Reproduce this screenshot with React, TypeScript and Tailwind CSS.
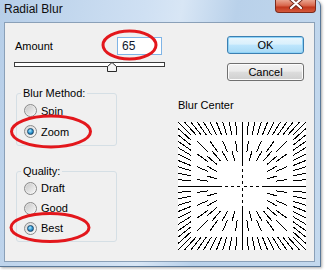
import React from "react";

function Radio({ checked }: { checked?: boolean }) {
  return (
    <span className="w-[13px] h-[13px] rounded-full border border-[#8a8a8a] bg-[linear-gradient(135deg,#d6d6d6,#fdfdfd)] flex items-center justify-center shrink-0">
      {checked ? (
        <span className="w-[7px] h-[7px] rounded-full border border-[#1b4a6e] bg-[radial-gradient(circle_at_40%_35%,#b4ecff_0%,#3aa2dc_45%,#0b4b7c_100%)]" />
      ) : (
        <span className="w-[9px] h-[9px] rounded-full bg-[linear-gradient(135deg,#c9c9c9,#f5f5f5)]" />
      )}
    </span>
  );
}

function Row({ label, checked, h }: { label: string; checked?: boolean; h: "a" | "b" }) {
  return (
    <div className={h === "a" ? "flex items-center h-[21px] pl-[7px] gap-[4px]" : "flex items-center h-[20px] pl-[7px] gap-[4px]"}>
      <Radio checked={checked} />
      <span>{label}</span>
    </div>
  );
}

function BlurCenter() {
  const C = 64;
  const segs: [number, number, number, number][] = [];
  const band = (dx: number, dy: number, R: number, a: number, b: number) => {
    segs.push([C + (dx * a) / R, C + (dy * a) / R, C + (dx * b) / R, C + (dy * b) / R]);
  };
  const ring = (R: number, n: number, f: (j: number) => [number, number] | null) => {
    const step = R / n;
    for (let j = -n + 1; j <= n - 1; j++) {
      if (j === 0) continue;
      const t = step * j;
      const r = f(j);
      if (!r) continue;
      band(t, -R, R, r[0], r[1]);
      band(t, R, R, r[0], r[1]);
      band(-R, t, R, r[0], r[1]);
      band(R, t, R, r[0], r[1]);
    }
    const r = f(n);
    if (r) {
      band(R, R, R, r[0], r[1]);
      band(-R, R, R, r[0], r[1]);
      band(R, -R, R, r[0], r[1]);
      band(-R, -R, R, r[0], r[1]);
    }
  };
  ring(64, 10, () => [51, 64]);
  ring(46, 7, (j) => (Math.abs(j) % 2 === 1 ? [34, 45] : [25, 35]));
  const axisDash: [number, number][] = [
    [20, 64],
    [14, 17],
    [8, 11],
    [2, 5],
  ];
  for (const [a, b] of axisDash) {
    band(0, -64, 64, a, b);
    band(0, 64, 64, a, b);
    band(-64, 0, 64, a, b);
    band(64, 0, 64, a, b);
  }
  return (
    <svg width="128" height="128" viewBox="0 0 128 128" className="block bg-white" shapeRendering="crispEdges">
      {segs.map((s, i) => (
        <line key={i} x1={s[0]} y1={s[1]} x2={s[2]} y2={s[3]} stroke="#000" strokeWidth="1" />
      ))}
    </svg>
  );
}

export default function App() {
  return (
    <div className="w-[325px] h-[270px] bg-white relative overflow-hidden font-['Liberation_Sans',Arial,sans-serif] text-[11px] leading-[14px] text-[#000]">
      <div className="w-[321px] h-[267px] rounded-tr-[6px] border-r border-b border-[#5a7898] bg-[linear-gradient(100deg,#b6cee8_0%,#cfe0f3_40%,#d8e6f5_50%,#b9d1ea_65%,#c4d9ee_100%)] shadow-[1px_1px_3px_rgba(0,0,0,0.35)] flex flex-col">
        <div className="h-[22px] flex items-start justify-between shrink-0">
          <span className="pl-[4px] pt-[2px] text-[12px] leading-[15px] text-[#0d0d0d]">Radial Blur</span>
          <div className="mr-[4px] w-[41px] h-[13px] rounded-b-[4px] border border-t-0 border-[#7d2a1b] bg-[linear-gradient(to_bottom,#e9a48f_0%,#d9694f_45%,#c2381d_60%,#d4593c_100%)] flex items-start justify-center">
            <svg width="14" height="10" viewBox="0 0 14 10" className="mt-[-1px]">
              <path d="M2 0 L12 9 M12 0 L2 9" stroke="#6d2316" strokeWidth="4" strokeLinecap="round" />
              <path d="M2 0 L12 9 M12 0 L2 9" stroke="#ffffff" strokeWidth="2.2" strokeLinecap="round" />
            </svg>
          </div>
        </div>
        <div className="ml-[4px] w-[311px] h-[240px] border border-[#8aa0b8] bg-[#f0f0f0] flex shrink-0">
          <div className="w-[173px] pl-[9px] pt-[14px] flex flex-col">
            <div className="w-[148px] h-[18px] flex items-center justify-between">
              <span className="pl-[1px]">Amount</span>
              <div className="w-[45px] h-[18px] border border-[#7fb4e6] bg-white flex items-center pl-[4px] text-[12px] text-[#101830]">65</div>
            </div>
            <div className="mt-[7px] relative w-[151px] h-[10px]">
              <div className="h-[5px] w-[151px] border border-[#3c3c3c] bg-white" />
              <svg width="10" height="10" viewBox="0 0 10 10" className="absolute left-[93px] top-0">
                <path d="M0.5 9.5 L0.5 4.5 L5 0.5 L9.5 4.5 L9.5 9.5 Z" fill="#f4f4f4" stroke="#2a2a2a" strokeWidth="1" />
              </svg>
            </div>
            <fieldset className="mt-[14px] ml-[2px] w-[101px] border border-[#d5dfe5] rounded-[3px] pb-[3px]">
              <legend className="ml-[4px] px-[2px] leading-[14px]">Blur Method:</legend>
              <Row label="Spin" h="a" />
              <Row label="Zoom" h="a" checked />
            </fieldset>
            <fieldset className="mt-[18px] ml-[2px] w-[101px] border border-[#d5dfe5] rounded-[3px] pb-[3px]">
              <legend className="ml-[4px] px-[2px] leading-[14px]">Quality:</legend>
              <Row label="Draft" h="b" />
              <Row label="Good" h="b" />
              <Row label="Best" h="b" checked />
            </fieldset>
          </div>
          <div className="w-[128px] pt-[13px] flex flex-col">
            <button className="self-end mr-[2px] w-[77px] h-[18px] rounded-[3px] border border-[#3c7fb1] bg-[linear-gradient(to_bottom,#eaf6fd_0%,#d9f0fc_45%,#bee6fd_50%,#a7d9f5_100%)] shadow-[inset_0_0_0_1px_#8fd3f7] text-[11px] leading-[14px]">OK</button>
            <button className="self-end mr-[2px] mt-[9px] w-[77px] h-[18px] rounded-[3px] border border-[#707070] bg-[linear-gradient(to_bottom,#f2f2f2_0%,#ebebeb_45%,#dddddd_50%,#cfcfcf_100%)] shadow-[inset_0_0_0_1px_#fcfcfc] text-[11px] leading-[14px]">Cancel</button>
            <div className="mt-[17px] h-[14px]">Blur Center</div>
            <div className="mt-[10px]">
              <BlurCenter />
            </div>
          </div>
        </div>
      </div>
      <svg className="absolute left-0 top-0 pointer-events-none" width="325" height="270" viewBox="0 0 325 270">
        <ellipse cx="129.5" cy="45" rx="26.5" ry="14" fill="none" stroke="#e3171c" strokeWidth="3" />
        <ellipse cx="51" cy="131.5" rx="39.5" ry="15.5" fill="none" stroke="#e3171c" strokeWidth="3" />
        <ellipse cx="50" cy="227.5" rx="39" ry="14" fill="none" stroke="#e3171c" strokeWidth="3" />
      </svg>
    </div>
  );
}
